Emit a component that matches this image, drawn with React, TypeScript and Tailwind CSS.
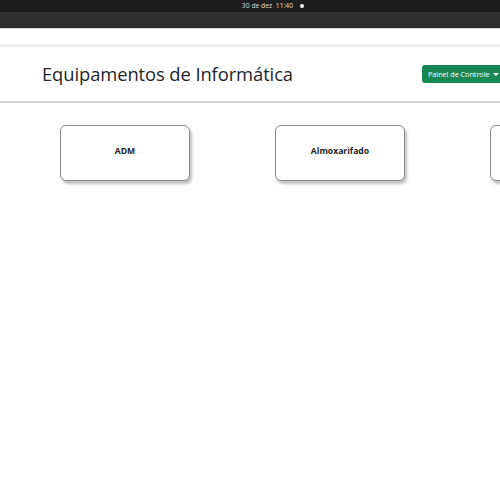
const setores = ["ADM", "Almoxarifado", ""];

const App = () => {
  return (
    <div className="w-[500px] h-[500px] overflow-hidden bg-white font-['Open_Sans',sans-serif]">
      {/* barra do sistema */}
      <div className="h-[12px] bg-[#1d1d1d] flex items-center justify-center pl-[46px] gap-[7px] text-[6.8px] text-[#dcdcdc]">
        <span>30 de dez&nbsp;&nbsp;11:40</span>
        <span className="w-[4px] h-[4px] rounded-full bg-white" />
      </div>
      <div className="h-[16px] bg-[#2f2f2f]" />
      <div className="h-[1px] bg-[#d6d6d6]" />
      <div className="h-[15px] bg-white" />
      <div className="h-[3px] bg-[#ececec]" />

      {/* cabeçalho */}
      <header className="h-[56px] flex items-center justify-between pl-[42px] border-b-2 border-[#d4d4d4]">
        <h1 className="text-[18.4px] leading-none text-[#212529] font-medium tracking-[-0.1px]">
          Equipamentos de Informática
        </h1>
        <button className="h-[18px] w-[86px] shrink-0 -mr-[8px] rounded-[3px] bg-[#198754] text-white text-[7.2px] flex items-center pl-[6px] gap-[3px]">
          <span>Painel de Controle</span>
          <span className="w-0 h-0 border-l-[3px] border-r-[3px] border-t-[3px] border-l-transparent border-r-transparent border-t-white" />
        </button>
      </header>

      {/* setores */}
      <div className="flex gap-[85px] pl-[60px] pt-[22px]">
        {setores.map((setor, i) => (
          <div
            key={i}
            className="w-[130px] h-[56px] shrink-0 rounded-[6px] border border-[#8a8a8a] bg-white shadow-[2px_3px_3px_rgba(0,0,0,0.25)] flex items-center justify-center pb-[4px]"
          >
            <span className="text-[8.6px] font-bold text-[#212529]">{setor}</span>
          </div>
        ))}
      </div>
    </div>
  );
};

export default App;
